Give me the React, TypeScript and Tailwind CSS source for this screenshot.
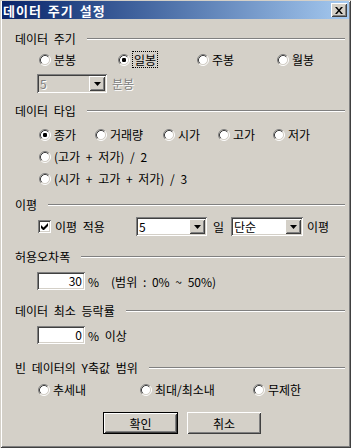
const raised =
  "bg-[#d4d0c8] shadow-[inset_1px_1px_0_#ffffff,inset_-1px_-1px_0_#404040,inset_2px_2px_0_#d4d0c8,inset_-2px_-2px_0_#808080]";
const sunken =
  "shadow-[inset_1px_1px_0_#808080,inset_-1px_-1px_0_#ffffff,inset_2px_2px_0_#404040,inset_-2px_-2px_0_#d4d0c8]";

const Radio = ({ checked }: { checked?: boolean }) => (
  <svg width="12" height="12" viewBox="0 0 12 12" className="shrink-0">
    <circle cx="6" cy="6" r="4.5" fill="#fff" />
    <path d="M2.11 9.89 A5.5 5.5 0 0 1 9.89 2.11" fill="none" stroke="#808080" />
    <path d="M9.89 2.11 A5.5 5.5 0 0 1 2.11 9.89" fill="none" stroke="#fff" />
    <path d="M2.82 9.18 A4.5 4.5 0 0 1 9.18 2.82" fill="none" stroke="#404040" />
    <path d="M9.18 2.82 A4.5 4.5 0 0 1 2.82 9.18" fill="none" stroke="#d4d0c8" />
    {checked && <rect x="4" y="4" width="4" height="4" rx="1.2" fill="#000" />}
  </svg>
);

const RadioItem = ({
  label,
  checked,
  focus,
  className = "",
}: {
  label: string;
  checked?: boolean;
  focus?: boolean;
  className?: string;
}) => (
  <div className={`flex items-center gap-[3px] ${className}`}>
    <Radio checked={checked} />
    <span className={focus ? "outline outline-1 outline-dotted outline-black px-[1px]" : ""}>
      {label}
    </span>
  </div>
);

const Section = ({ label, className = "" }: { label: string; className?: string }) => (
  <div className={`flex items-center h-[15px] pl-[15px] pr-[6px] ${className}`}>
    <span className="whitespace-pre">{label}</span>
    <div className="flex-1 ml-[11px] border-t border-t-[#808080] border-b border-b-white" />
  </div>
);

const DropArrow = () => (
  <div className={`w-[16px] h-full flex items-center justify-center ${raised}`}>
    <svg width="7" height="4" viewBox="0 0 7 4">
      <path d="M0 0h7L3.5 4z" fill="#000" />
    </svg>
  </div>
);

const Combo = ({
  value,
  width,
  disabled,
}: {
  value: string;
  width: string;
  disabled?: boolean;
}) => (
  <div
    className={`${width} h-[19px] p-[2px] flex ${sunken} ${
      disabled ? "bg-[#d4d0c8]" : "bg-white"
    }`}
  >
    <span
      className={`flex-1 pl-[1px] leading-[15px] ${
        disabled ? "text-[#808080] [text-shadow:1px_1px_0_#fff]" : ""
      }`}
    >
      {value}
    </span>
    <DropArrow />
  </div>
);

const Edit = ({ value }: { value: string }) => (
  <div className={`w-[48px] h-[18px] bg-white px-[3px] text-right leading-[18px] ${sunken}`}>
    {value}
  </div>
);

export default function App() {
  return (
    <div
      className="w-[351px] h-[448px] bg-[#d4d0c8] text-black text-[12px] leading-[15px] [word-spacing:3px] font-['Noto_Sans_CJK_KR','Noto_Sans',sans-serif] flex flex-col overflow-hidden shadow-[inset_1px_1px_0_#d4d0c8,inset_-1px_-1px_0_#404040,inset_2px_2px_0_#ffffff,inset_-2px_-2px_0_#808080]"
    >
      {/* title bar */}
      <div className="mx-[2px] mt-[1px] h-[18px] flex items-center bg-gradient-to-r from-[#0a246a] to-[#a6caf0] pl-[1px] pr-[2px]">
        <span className="text-white font-bold text-[13px] tracking-[1px] [word-spacing:2px] flex-1">
          데이터 주기 설정
        </span>
        <div className={`w-[16px] h-[14px] flex items-center justify-center ${raised}`}>
          <svg width="8" height="7" viewBox="0 0 8 7">
            <path d="M0 0h2l2 2.5L6 0h2L5 3.5 8 7H6L4 4.5 2 7H0l3-3.5z" fill="#000" />
          </svg>
        </div>
      </div>

      <Section label="데이터 주기" className="mt-[12px]" />
      <div className="mt-[6px] h-[15px] pl-[39px] grid grid-cols-[79px_79px_80px_auto]">
        <RadioItem label="분봉" />
        <RadioItem label="일봉" checked focus />
        <RadioItem label="주봉" />
        <RadioItem label="월봉" />
      </div>
      <div className="mt-[7px] pl-[37px] flex items-center gap-[5px]">
        <Combo value="5" width="w-[70px]" disabled />
        <span className="text-[#808080] [text-shadow:1px_1px_0_#fff]">분봉</span>
      </div>

      <Section label="데이터 타입" className="mt-[10px]" />
      <div className="mt-[9px] h-[15px] pl-[39px] flex">
        <RadioItem label="종가" checked className="w-[56px]" />
        <RadioItem label="거래량" className="w-[68px]" />
        <RadioItem label="시가" className="w-[55px]" />
        <RadioItem label="고가" className="w-[55px]" />
        <RadioItem label="저가" />
      </div>
      <div className="mt-[7px] h-[15px] pl-[39px] flex">
        <RadioItem label="(고가 + 저가) / 2" />
      </div>
      <div className="mt-[7px] h-[15px] pl-[39px] flex">
        <RadioItem label="(시가 + 고가 + 저가) / 3" />
      </div>

      <Section label="이평" className="mt-[11px]" />
      <div className="mt-[5px] pl-[38px] grid grid-cols-[98px_71px_24px_72px_auto] items-center">
        <div className="flex items-center gap-[4px]">
          <div className={`w-[13px] h-[13px] bg-white flex items-center justify-center ${sunken}`}>
            <svg width="7" height="7" viewBox="0 0 7 7">
              <path d="M0 2v3l2 2h1l4-4V0L2.5 4.5z" fill="#000" />
            </svg>
          </div>
          <span>이평 적용</span>
        </div>
        <Combo value="5" width="w-[71px]" />
        <span className="pl-[6px]">일</span>
        <Combo value="단순" width="w-[72px]" />
        <span className="pl-[4px]">이평</span>
      </div>

      <Section label="허용오차폭" className="mt-[13px]" />
      <div className="mt-[8px] pl-[37px] flex items-center">
        <Edit value="30" />
        <span className="ml-[3px]">%</span>
        <span className="ml-[12px] whitespace-pre">(범위 : 0% ~ 50%)</span>
      </div>

      <Section label="데이터 최소 등락률" className="mt-[13px]" />
      <div className="mt-[8px] pl-[37px] flex items-center">
        <Edit value="0" />
        <span className="ml-[3px]">% 이상</span>
      </div>

      <Section label="빈 데이터의 Y축값 범위" className="mt-[16px]" />
      <div className="mt-[7px] h-[15px] pl-[38px] flex">
        <RadioItem label="추세내" className="w-[102px]" />
        <RadioItem label="최대/최소내" className="w-[113px]" />
        <RadioItem label="무제한" />
      </div>

      <div className="mt-[15px] pl-[103px] flex gap-[9px]">
        <div className="w-[75px] h-[22px] border border-black">
          <div className={`w-full h-full flex items-center justify-center ${raised}`}>확인</div>
        </div>
        <div className={`w-[74px] h-[22px] flex items-center justify-center ${raised}`}>취소</div>
      </div>
    </div>
  );
}
